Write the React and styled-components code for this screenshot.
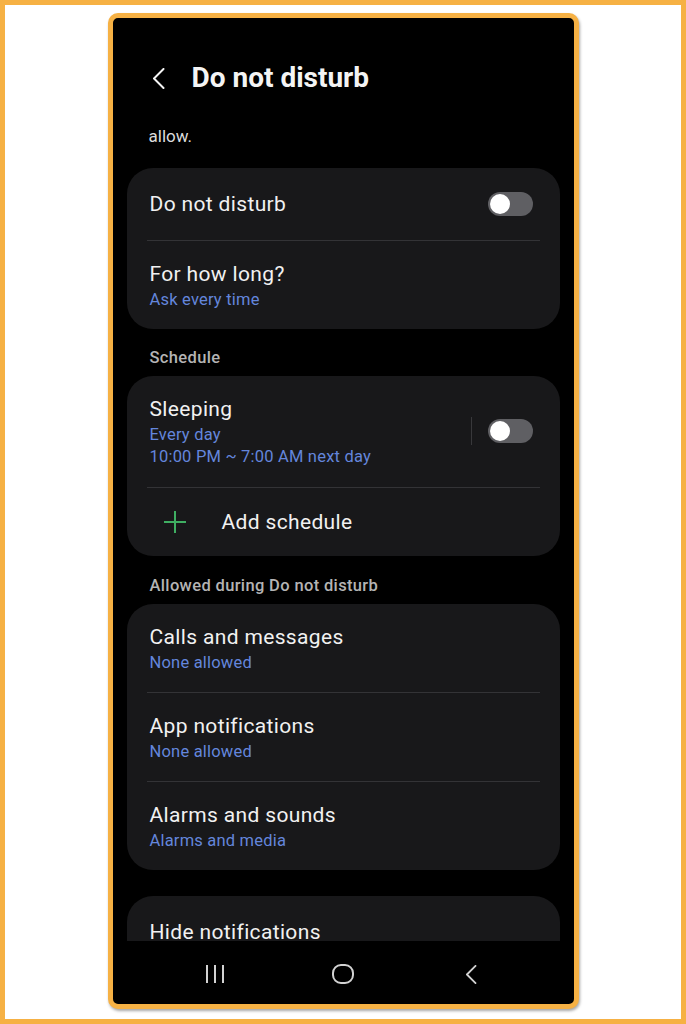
import React from "react";
import styled, { createGlobalStyle } from "styled-components";

const GlobalStyle = createGlobalStyle`
  body {
    margin: 0;
    font-family: Roboto, "Liberation Sans", sans-serif;
  }
`;

const Page = styled.div`
  box-sizing: border-box;
  width: 686px;
  height: 1024px;
  border: 5px solid #f6b144;
  background: #fff;
  display: flex;
  justify-content: center;
  padding-top: 8px;
`;

const Phone = styled.div`
  box-sizing: border-box;
  width: 471px;
  height: 996px;
  border: 5px solid #f6b144;
  border-radius: 10px;
  background: #000;
  box-shadow: 1px 2px 3px rgba(0, 0, 0, 0.35);
  overflow: hidden;
  display: flex;
  flex-direction: column;
`;

const Viewport = styled.div`
  flex: 1;
  min-height: 0;
  overflow: hidden;
`;

const Header = styled.div`
  display: flex;
  align-items: center;
  gap: 27px;
  height: 32px;
  padding: 44px 0 0 39px;
  color: #f4f4f4;
`;

const Title = styled.h1`
  margin: 0;
  font-size: 28px;
  line-height: 32px;
  font-weight: 700;
  color: #f4f4f4;
`;

const Intro = styled.div`
  margin-top: 32px;
  padding-left: 36px;
  font-size: 17px;
  line-height: 20px;
  color: #dcdcdc;
`;

const Content = styled.div`
  padding: 0 14px;
`;

const Card = styled.div`
  margin-top: ${(p) => p.$mt || 0}px;
  background: #18181a;
  border-radius: 26px;
`;

const SectionLabel = styled.div`
  margin-top: ${(p) => p.$mt}px;
  padding-left: 23px;
  font-size: 16.5px;
  line-height: 20px;
  font-weight: 500;
  letter-spacing: 0.35px;
  color: #b4b4b4;
`;

const Row = styled.div`
  display: flex;
  align-items: center;
  height: 72px;
  padding: 0 27px 0 23px;
`;

const TextRow = styled.div`
  padding: 18px 23px 18px;
`;

const ScheduleRow = styled.div`
  display: flex;
  align-items: center;
  padding: 18px 27px 19px 23px;
`;

const RowText = styled.div`
  flex: 1;
`;

const ItemTitle = styled.div`
  font-size: 21px;
  line-height: 30px;
  letter-spacing: 0.35px;
  color: #f1f1f1;
`;

const Sub = styled.div`
  font-size: 16.5px;
  line-height: 22px;
  letter-spacing: 0.2px;
  color: #6486dc;
`;

const Divider = styled.div`
  height: 1px;
  margin: 0 20px;
  background: #333336;
`;

const VLine = styled.div`
  width: 1px;
  height: 28px;
  margin-right: 16px;
  background: #38383b;
`;

const Track = styled.div`
  position: relative;
  width: 45px;
  height: 24px;
  border-radius: 12px;
  background: #5f5f63;
  flex-shrink: 0;
`;

const Knob = styled.span`
  position: absolute;
  left: 2px;
  top: 2px;
  width: 20px;
  height: 20px;
  border-radius: 50%;
  background: #fff;
`;

const AddRow = styled.div`
  display: flex;
  align-items: center;
  gap: 35px;
  height: 68px;
  padding-left: 36px;
`;

const Nav = styled.div`
  height: 63px;
  display: flex;
  justify-content: center;
  align-items: center;
  gap: 88px;
  padding-top: 3px;
  box-sizing: border-box;
`;

const NavSlot = styled.div`
  width: 40px;
  display: flex;
  justify-content: center;
  color: #d2d2d2;
`;

const Toggle = () => (
  <Track>
    <Knob />
  </Track>
);

const BackIcon = ({ w = 13, h = 21, sw = 2 }) => (
  <svg width={w} height={h} viewBox="0 0 13 21" fill="none">
    <path d="M11.5 1 L2 10.5 L11.5 20" stroke="currentColor" strokeWidth={sw} strokeLinecap="round" strokeLinejoin="round" />
  </svg>
);

const PlusIcon = () => (
  <svg width="24" height="24" viewBox="0 0 24 24" fill="none">
    <path d="M12 1 V23 M1 12 H23" stroke="#3fae62" strokeWidth="2" />
  </svg>
);

const RecentsIcon = () => (
  <svg width="20" height="20" viewBox="0 0 20 20" fill="none">
    <path d="M2 1 V19 M10 1 V19 M18 1 V19" stroke="currentColor" strokeWidth="2" />
  </svg>
);

const HomeIcon = () => (
  <svg width="22" height="20" viewBox="0 0 22 20" fill="none">
    <rect x="1" y="1" width="20" height="18" rx="8" stroke="currentColor" strokeWidth="2" />
  </svg>
);

export default function App() {
  return (
    <>
      <GlobalStyle />
      <Page>
        <Phone>
          <Viewport>
            <Header>
              <BackIcon />
              <Title>Do not disturb</Title>
            </Header>
            <Intro>allow.</Intro>
            <Content>
              <Card $mt={22}>
                <Row>
                  <RowText>
                    <ItemTitle>Do not disturb</ItemTitle>
                  </RowText>
                  <Toggle />
                </Row>
                <Divider />
                <TextRow>
                  <ItemTitle>For how long?</ItemTitle>
                  <Sub>Ask every time</Sub>
                </TextRow>
              </Card>

              <SectionLabel $mt={19}>Schedule</SectionLabel>
              <Card $mt={8}>
                <ScheduleRow>
                  <RowText>
                    <ItemTitle>Sleeping</ItemTitle>
                    <Sub>Every day</Sub>
                    <Sub>10:00 PM ~ 7:00 AM next day</Sub>
                  </RowText>
                  <VLine />
                  <Toggle />
                </ScheduleRow>
                <Divider />
                <AddRow>
                  <PlusIcon />
                  <ItemTitle>Add schedule</ItemTitle>
                </AddRow>
              </Card>

              <SectionLabel $mt={20}>Allowed during Do not disturb</SectionLabel>
              <Card $mt={8}>
                <TextRow>
                  <ItemTitle>Calls and messages</ItemTitle>
                  <Sub>None allowed</Sub>
                </TextRow>
                <Divider />
                <TextRow>
                  <ItemTitle>App notifications</ItemTitle>
                  <Sub>None allowed</Sub>
                </TextRow>
                <Divider />
                <TextRow>
                  <ItemTitle>Alarms and sounds</ItemTitle>
                  <Sub>Alarms and media</Sub>
                </TextRow>
              </Card>

              <Card $mt={26}>
                <Row>
                  <ItemTitle>Hide notifications</ItemTitle>
                </Row>
              </Card>
            </Content>
          </Viewport>
          <Nav>
            <NavSlot>
              <RecentsIcon />
            </NavSlot>
            <NavSlot>
              <HomeIcon />
            </NavSlot>
            <NavSlot>
              <BackIcon w={12} h={19} sw={2} />
            </NavSlot>
          </Nav>
        </Phone>
      </Page>
    </>
  );
}
